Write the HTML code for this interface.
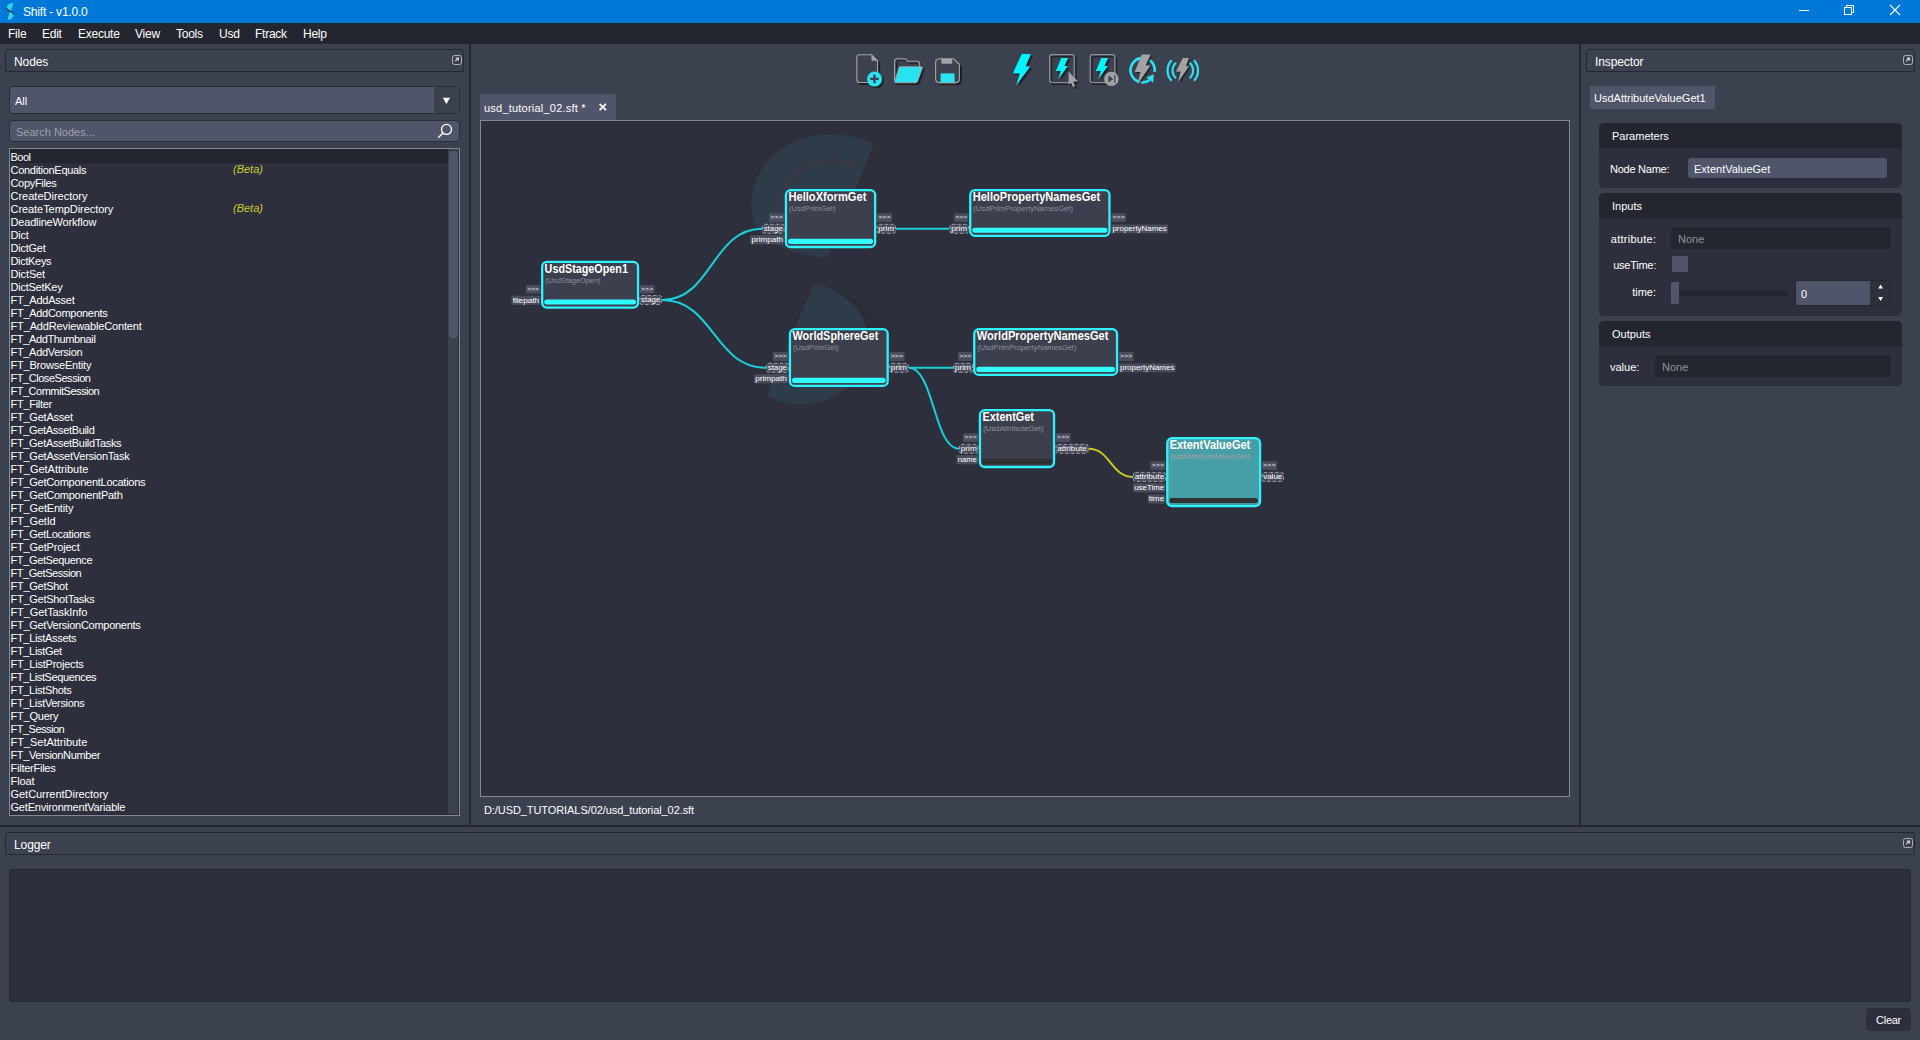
<!DOCTYPE html>
<html>
<head>
<meta charset="utf-8">
<title>Shift - v1.0.0</title>
<style>
html,body{margin:0;padding:0;}
body{width:1920px;height:1040px;overflow:hidden;background:#3c4150;font-family:"Liberation Sans",sans-serif;font-size:11px;color:#fff;position:relative;}
.abs{position:absolute;}
#titlebar{left:0;top:0;width:1920px;height:23px;background:#0078d7;}
#titlebar .t{position:absolute;left:23px;top:5px;font-size:12px;line-height:14px;letter-spacing:-0.2px;color:#fff;white-space:nowrap;}
#menubar{left:0;top:23px;width:1920px;height:21px;background:#23252f;}
#menubar span{position:absolute;top:4px;font-size:12px;line-height:14px;letter-spacing:-0.25px;color:#fff;white-space:nowrap;}
.dockhdr{box-sizing:border-box;border:1px solid #252733;border-radius:3px 3px 0 0;background:#3c4150;height:23px;}
.dockhdr .lbl{position:absolute;left:8px;top:5px;font-size:12px;line-height:14px;letter-spacing:-0.1px;white-space:nowrap;}
.flt{position:absolute;box-sizing:border-box;width:10px;height:10px;border:1.5px solid #acaeb9;border-radius:2.5px;}
.vsep{width:2px;background:#252733;}
.hsep{height:2px;background:#252733;}
#combo{left:9px;top:86px;width:451px;height:28px;box-sizing:border-box;border:1px solid #2a2c38;border-radius:4px;background:#50556a;overflow:hidden;}
#combo .btn{position:absolute;right:0;top:0;width:25px;height:26px;background:#3c4150;border-radius:3px 0 0 3px;}
#combo .txt{position:absolute;left:5px;top:8px;line-height:13px;}
#search{left:9px;top:120px;width:451px;height:22px;box-sizing:border-box;border:1px solid #2a2c38;border-radius:4px;background:#50556a;}
#search .txt{position:absolute;left:6px;top:5px;line-height:13px;color:#9fa2ae;}
#list{left:9px;top:148px;width:451px;height:668px;box-sizing:border-box;border:1px solid #858893;background:#2d303c;overflow:hidden;}
#list .rows{position:absolute;left:0;top:0;width:438px;}
#list .rows div.sel{height:14px;}
#list .rows div.sel span{top:2px;}
#list .rows div{height:13px;line-height:13px;position:relative;white-space:nowrap;letter-spacing:-0.2px;}
#list .rows div.sel{background:#23252f;}
#list .rows div span{position:absolute;left:0.5px;top:1px;}
#list .rows div i{position:absolute;left:223px;top:0px;color:#c8cf2c;font-style:italic;letter-spacing:0;}
#list .track{position:absolute;left:438px;top:0;width:10px;height:665px;background:#3c4150;}
#list .thumb{position:absolute;left:438.5px;top:1.5px;width:9px;height:187px;background:#50556a;border-radius:4px;}
#tab{left:480px;top:94px;width:136px;height:26px;background:#50556a;}
#tab .txt{position:absolute;left:4px;top:8px;line-height:13px;white-space:nowrap;letter-spacing:0.22px;}
#graph{left:480px;top:120px;width:1090px;height:677px;box-sizing:border-box;border:1px solid #858893;background:#2d303c;overflow:hidden;}
#graph svg{position:absolute;left:-1px;top:-1px;}
#graph svg text{font-family:"Liberation Sans",sans-serif;}
#graph svg text.pt{fill:#fff;}
#path{left:484px;top:804px;line-height:13px;white-space:nowrap;letter-spacing:-0.08px;}
.grp{box-sizing:border-box;border-radius:5px;background:#2d303c;overflow:hidden;}
.grp .h{position:absolute;left:0;top:0;right:0;height:25px;background:#23252f;}
.grp .h span{position:absolute;left:13px;top:7px;line-height:13px;}
.lab{line-height:13px;white-space:nowrap;text-align:right;}
.fld{box-sizing:border-box;border-radius:3px;background:#23252f;color:#8f929d;}
.fld span{position:absolute;left:7px;top:6px;line-height:13px;}
#nodetag{left:1590px;top:86px;width:125px;height:23px;background:#50556a;}
#nodetag span{position:absolute;left:4px;top:6px;line-height:13px;white-space:nowrap;}
#logbox{left:9px;top:869px;width:1902px;height:133px;box-sizing:border-box;border:1px solid #262834;border-radius:3px;background:#2d303c;}
#clear{left:1866px;top:1008px;width:45px;height:23px;border-radius:4px;background:#2d303c;text-align:center;line-height:24.5px;letter-spacing:-0.3px;}
</style>
</head>
<body>
<!-- title bar -->
<div id="titlebar" class="abs">
<svg class="abs" style="left:4px;top:2px" width="14" height="19" viewBox="0 0 14 19">
<path d="M9.6 1.2 C5.4 1.0 2.6 3.0 2.4 6.2 C3.6 7.4 5.6 7.8 7.0 8.4 Z" fill="#2ad3e6"/>
<path d="M3.4 17.8 C7.0 17.6 9.6 15.6 9.9 12.2 C8.6 10.9 6.8 10.4 5.6 9.9 Z" fill="#2ad3e6"/>
<path d="M2.3 5.6 C2.4 8.0 4.8 8.8 6.6 9.5 C8.4 10.2 9.9 10.9 10.0 12.8" fill="none" stroke="#3a4454" stroke-width="1.3"/>
</svg>
<div class="t">Shift - v1.0.0</div>
<svg class="abs" style="left:1790px;top:0" width="130" height="23" viewBox="1790 0 130 23" shape-rendering="crispEdges">
<rect x="1799" y="10" width="10" height="1" fill="#fff"/>
<g fill="none" stroke="#fff" stroke-width="1">
<rect x="1844.5" y="7.5" width="7" height="7"/>
<path d="M1846.5 7.5 V5.5 H1853.5 V12.5 H1851.5"/>
</g>
<g stroke="#fff" stroke-width="1.1" shape-rendering="auto"><path d="M1890 5 L1900 15 M1900 5 L1890 15"/></g>
</svg>
</div>
<!-- menu bar -->
<div id="menubar" class="abs">
<span style="left:8px">File</span>
<span style="left:42px">Edit</span>
<span style="left:78px">Execute</span>
<span style="left:135px">View</span>
<span style="left:176px">Tools</span>
<span style="left:219px">Usd</span>
<span style="left:255px">Ftrack</span>
<span style="left:303px">Help</span>
</div>

<!-- separators -->
<div class="abs vsep" style="left:469px;top:44px;height:782px;"></div>
<div class="abs vsep" style="left:1579px;top:44px;height:782px;"></div>
<div class="abs hsep" style="left:0;top:825px;width:1920px;"></div>

<!-- Nodes dock -->
<div class="abs dockhdr" style="left:5px;top:49px;width:459px;"><div class="lbl">Nodes</div><div class="flt" style="left:446px;top:5px;"><svg class="abs" style="left:0;top:0" width="8" height="8" viewBox="0 0 8 8"><path d="M2.2 5.2 L5.2 2.2 M2.8 2 H5.4 V4.6" fill="none" stroke="#d4d6de" stroke-width="1.2"/></svg></div></div>
<div id="combo" class="abs"><div class="txt">All</div><div class="btn"><svg class="abs" style="left:8px;top:10px" width="9" height="8" viewBox="0 0 9 8"><path d="M0.8 0.8 H8 L4.4 7 Z" fill="#fff"/></svg></div></div>
<div id="search" class="abs"><div class="txt">Search Nodes...</div>
<svg class="abs" style="left:425px;top:0px" width="20" height="19" viewBox="0 0 20 19"><circle cx="11.5" cy="8.4" r="5" fill="none" stroke="#fff" stroke-width="1.3"/><path d="M8 12 L3.2 16.8" stroke="#fff" stroke-width="1.4" fill="none"/></svg>
</div>
<div id="list" class="abs">
<div class="rows">
<div class="sel"><span style="letter-spacing:-0.508px">Bool</span></div>
<div><span style="letter-spacing:-0.292px">ConditionEquals</span><i>(Beta)</i></div>
<div><span style="letter-spacing:-0.323px">CopyFiles</span></div>
<div><span style="letter-spacing:-0.002px">CreateDirectory</span></div>
<div><span style="letter-spacing:-0.062px">CreateTempDirectory</span><i>(Beta)</i></div>
<div><span style="letter-spacing:-0.169px">DeadlineWorkflow</span></div>
<div><span style="letter-spacing:-0.176px">Dict</span></div>
<div><span style="letter-spacing:-0.241px">DictGet</span></div>
<div><span style="letter-spacing:-0.332px">DictKeys</span></div>
<div><span style="letter-spacing:-0.138px">DictSet</span></div>
<div><span style="letter-spacing:-0.242px">DictSetKey</span></div>
<div><span style="letter-spacing:-0.24px">FT_AddAsset</span></div>
<div><span style="letter-spacing:-0.281px">FT_AddComponents</span></div>
<div><span style="letter-spacing:-0.143px">FT_AddReviewableContent</span></div>
<div><span style="letter-spacing:-0.367px">FT_AddThumbnail</span></div>
<div><span style="letter-spacing:-0.314px">FT_AddVersion</span></div>
<div><span style="letter-spacing:-0.2px">FT_BrowseEntity</span></div>
<div><span style="letter-spacing:-0.455px">FT_CloseSession</span></div>
<div><span style="letter-spacing:-0.489px">FT_CommitSession</span></div>
<div><span style="letter-spacing:-0.278px">FT_Filter</span></div>
<div><span style="letter-spacing:-0.232px">FT_GetAsset</span></div>
<div><span style="letter-spacing:-0.329px">FT_GetAssetBuild</span></div>
<div><span style="letter-spacing:-0.315px">FT_GetAssetBuildTasks</span></div>
<div><span style="letter-spacing:-0.232px">FT_GetAssetVersionTask</span></div>
<div><span style="letter-spacing:-0.034px">FT_GetAttribute</span></div>
<div><span style="letter-spacing:-0.271px">FT_GetComponentLocations</span></div>
<div><span style="letter-spacing:-0.252px">FT_GetComponentPath</span></div>
<div><span style="letter-spacing:-0.171px">FT_GetEntity</span></div>
<div><span style="letter-spacing:-0.184px">FT_GetId</span></div>
<div><span style="letter-spacing:-0.308px">FT_GetLocations</span></div>
<div><span style="letter-spacing:-0.195px">FT_GetProject</span></div>
<div><span style="letter-spacing:-0.364px">FT_GetSequence</span></div>
<div><span style="letter-spacing:-0.436px">FT_GetSession</span></div>
<div><span style="letter-spacing:-0.267px">FT_GetShot</span></div>
<div><span style="letter-spacing:-0.27px">FT_GetShotTasks</span></div>
<div><span style="letter-spacing:-0.108px">FT_GetTaskInfo</span></div>
<div><span style="letter-spacing:-0.276px">FT_GetVersionComponents</span></div>
<div><span style="letter-spacing:-0.303px">FT_ListAssets</span></div>
<div><span style="letter-spacing:-0.316px">FT_ListGet</span></div>
<div><span style="letter-spacing:-0.228px">FT_ListProjects</span></div>
<div><span style="letter-spacing:-0.373px">FT_ListSequences</span></div>
<div><span style="letter-spacing:-0.318px">FT_ListShots</span></div>
<div><span style="letter-spacing:-0.325px">FT_ListVersions</span></div>
<div><span style="letter-spacing:-0.221px">FT_Query</span></div>
<div><span style="letter-spacing:-0.495px">FT_Session</span></div>
<div><span style="letter-spacing:-0.02px">FT_SetAttribute</span></div>
<div><span style="letter-spacing:-0.367px">FT_VersionNumber</span></div>
<div><span style="letter-spacing:-0.243px">FilterFiles</span></div>
<div><span style="letter-spacing:-0.094px">Float</span></div>
<div><span style="letter-spacing:-0.035px">GetCurrentDirectory</span></div>
<div><span style="letter-spacing:-0.195px">GetEnvironmentVariable</span></div>
</div>
<div class="track"></div><div class="thumb"></div>
</div>

<!-- toolbar -->
<svg class="abs" style="left:840px;top:44px" width="400" height="52" viewBox="840 44 400 52">
<defs>
<filter id="ds" x="-20%" y="-20%" width="150%" height="150%"><feDropShadow dx="1.8" dy="1.8" stdDeviation="0.45" flood-color="#1a1b24" flood-opacity="1"/></filter>
<filter id="ds2" x="-20%" y="-20%" width="150%" height="150%"><feDropShadow dx="1.3" dy="1.3" stdDeviation="0.4" flood-color="#1a1b24" flood-opacity="1"/></filter>
</defs>
<g filter="url(#ds)">
<!-- new -->
<path d="M859.5 54.8 H871.5 L877.5 60.8 V79.5 Q877.5 82.5 874.5 82.5 H859.5 Q856.8 82.5 856.8 79.5 V57.8 Q856.8 54.8 859.5 54.8 Z" fill="#3c4150" stroke="#a3a3a6" stroke-width="1.1"/>
<path d="M871.5 54.8 V60.8 H877.5 Z" fill="#a3a3a6"/>
<circle cx="874.5" cy="78.9" r="7.4" fill="#2be3f0"/>
<path d="M870.2 78.9 H878.8 M874.5 74.6 V83.2" stroke="#3c4150" stroke-width="2.3" fill="none"/>
<!-- open -->
<path d="M894.6 80.5 V61 Q894.6 58.8 896.8 58.8 H904.5 Q905.8 58.8 906.5 59.8 L907.6 61.3 H917 Q919.6 61.3 919.6 64 V66.5" fill="none" stroke="#a3a3a6" stroke-width="1.1"/>
<path d="M900.2 66.8 H921.4 Q922.6 66.8 922.2 68 L917.4 81.6 Q917 82.6 916 82.6 H895.8 Q894.4 82.6 894.9 81.3 L899 67.8 Q899.3 66.8 900.2 66.8 Z" fill="#2be3f0" stroke="#a3a3a6" stroke-width="0.9"/>
<!-- save -->
<path d="M939.5 58.8 H953.6 L959.4 64.6 V78.6 Q959.4 82.6 955.4 82.6 H939.5 Q935.6 82.6 935.6 78.6 V62.8 Q935.6 58.8 939.5 58.8 Z" fill="#3c4150" stroke="#a3a3a6" stroke-width="1.1"/>
<path d="M941.3 58.8 H952.2 V62.6 Q952.2 63.8 951 63.8 H942.5 Q941.3 63.8 941.3 62.6 Z" fill="#a3a3a6"/>
<rect x="940.6" y="73.4" width="14" height="9" fill="#2be3f0"/>
<!-- exec -->
<path d="M1021.7 54.1 H1030.8 L1025.4 66.6 H1030.1 L1016.2 85.3 L1020 73.3 H1012.9 Z" fill="#00f6ff"/>
<!-- exec selected -->
<rect x="1049.6" y="54.7" width="24.6" height="27.8" rx="2.2" fill="none" stroke="#8e8f96" stroke-width="1.2"/>
<path d="M1061.3 58.1 H1068 L1064.3 66 H1067.7 L1058.2 79.2 L1060.9 71 H1055.9 Z" fill="#00f6ff"/>
</g>
<path d="M1068.6 71.6 L1077.8 81.2 L1073.2 81.6 L1075 86.2 L1073 87 L1071 82.4 L1068.6 84.8 Z" fill="#a3a3a6" filter="url(#ds)"/>
<g filter="url(#ds)">
<!-- exec step -->
<rect x="1090.2" y="54.7" width="24.6" height="27.8" rx="2.2" fill="none" stroke="#8e8f96" stroke-width="1.2"/>
<path d="M1101.3 58.1 H1108 L1104.3 66 H1107.7 L1098.2 79.2 L1100.9 71 H1095.9 Z" fill="#00f6ff"/>
</g>
<circle cx="1111.4" cy="78.9" r="7.2" fill="#a3a3a6"/>
<path d="M1108.4 75.4 L1113.4 78.9 L1108.4 82.4 Z" fill="#3c4150"/>
<rect x="1114.2" y="75" width="1.2" height="7.8" fill="#3c4150"/>
<!-- loop -->
<path d="M1148.65 59.7 A12.1 12.1 0 0 1 1154.6 71.9" fill="none" stroke="#2be3f0" stroke-width="2.6"/>
<path d="M1141.5 58.15 A12.1 12.1 0 1 0 1149.6 80.1" fill="none" stroke="#2be3f0" stroke-width="2.6"/>
<path d="M1146.4 77.6 L1153.8 74.2 L1153.2 82.8 Z" fill="#2be3f0"/>
<path d="M1141.8 54.5 H1150.6 L1145.5 65.6 H1150.3 L1137.4 84.6 L1140.5 72.1 H1134.7 Z" fill="#a3a3a6" filter="url(#ds2)"/>
<!-- broadcast -->
<g fill="none" stroke="#2be3f0" stroke-width="2.2">
<path d="M1176 62.8 A10.3 10.3 0 0 0 1176 78.2"/>
<path d="M1171.6 60.2 A15.2 15.2 0 0 0 1171.6 80.8"/>
<path d="M1189.6 62.8 A10.3 10.3 0 0 1 1189.6 78.2"/>
<path d="M1194 60.2 A15.2 15.2 0 0 1 1194 80.8"/>
</g>
<path d="M1182.8 58.1 H1188.9 L1185.8 66.3 H1188.9 L1178 82.2 L1180.7 71.4 H1176 Z" fill="#a3a3a6" filter="url(#ds2)"/>
</svg>

<!-- tab + graph -->
<div id="tab" class="abs"><div class="txt">usd_tutorial_02.sft *</div>
<svg class="abs" style="left:118px;top:8px" width="10" height="10" viewBox="0 0 10 10"><path d="M1.6 1.8 L8.0 8.2 M8.0 1.8 L1.6 8.2" stroke="#fff" stroke-width="1.7" fill="none"/></svg>
</div>
<div id="graph" class="abs">
<svg width="1090" height="677" viewBox="480 120 1090 677">
<g id="wm"><path d="M874 144 C 860 137.5 845 134.5 830 134.5 C 785 134.5 751.5 165 751.5 206 C 751.5 236 776 252 827 258 Z" fill="#2e3c4a"/><path d="M852 165 C 826 154 796 166 784 188 C 774 207 776 224 786 240" fill="none" stroke="#373946" stroke-width="6" stroke-linecap="round"/><path d="M814 283 C 850 293 872 316 867 350 C 862 392 810 420 767 395.5 Z" fill="#2e3c4a"/><path d="M836 292 C 868 300 892 326 884 362 C 880 380 868 394 852 402 C 866 388 872 370 870 350 C 870 322 858 304 836 292 Z" fill="#2a2d38"/></g>
<path d="M662 300 C712.0 300 712.0 228.8 762 228.8" fill="none" stroke="#1bcfd8" stroke-width="2"/>
<path d="M662 300 C714.0 300 714.0 367.8 766 367.8" fill="none" stroke="#1bcfd8" stroke-width="2"/>
<path d="M896 228.8 C922.75 228.8 922.75 228.8 949.5 228.8" fill="none" stroke="#1bcfd8" stroke-width="2"/>
<path d="M908.8 367.8 C930.9 367.8 930.9 367.8 953 367.8" fill="none" stroke="#1bcfd8" stroke-width="2"/>
<path d="M908.8 367.8 C933.9 367.8 933.9 448.8 959 448.8" fill="none" stroke="#1bcfd8" stroke-width="2"/>
<path d="M1088.5 448.8 C1110.75 448.8 1110.75 476.9 1133 476.9" fill="none" stroke="#c9c91f" stroke-width="2"/>
<g><rect x="542.15" y="261.85" width="95.90" height="45.75" rx="4.8" fill="#3c3f4e" stroke="#2ef3fc" stroke-width="2.3"/><rect x="544.20" y="299.45" width="91.80" height="5.1" rx="2.5" fill="#30fdff"/><text x="544.60" y="272.70" font-size="12.3" font-weight="bold" fill="#fff" textLength="83.30" lengthAdjust="spacingAndGlyphs">UsdStageOpen1</text><text x="545.20" y="282.90" font-size="7.8" fill="#8e909a" textLength="55.30" lengthAdjust="spacingAndGlyphs">(UsdStageOpen)</text><rect x="526.00" y="285.00" width="14.30" height="8.60" rx="1" fill="#4b4d5e"/><text x="533.15" y="290.90" font-size="6.2" text-anchor="middle" textLength="11.70" lengthAdjust="spacingAndGlyphs" class="pt">&gt;&gt;&gt;</text><rect x="511.50" y="295.80" width="28.80" height="8.90" rx="1" fill="#4b4d5e"/><text x="525.90" y="302.60" font-size="7.5" text-anchor="middle" textLength="26.40" lengthAdjust="spacingAndGlyphs" class="pt">filepath</text><rect x="639.70" y="285.00" width="14.80" height="8.60" rx="1" fill="#4b4d5e"/><text x="647.10" y="290.90" font-size="6.2" text-anchor="middle" textLength="12.20" lengthAdjust="spacingAndGlyphs" class="pt">&gt;&gt;&gt;</text><rect x="639.90" y="295.50" width="21.60" height="9.00" rx="2" fill="#4b4d5e" stroke="#9c9ea9" stroke-width="1" stroke-dasharray="3.4 2.2"/><text x="650.70" y="302.10" font-size="7.5" text-anchor="middle" textLength="19.20" lengthAdjust="spacingAndGlyphs" class="pt">stage</text></g>
<g><rect x="785.95" y="190.05" width="89.20" height="56.95" rx="4.8" fill="#3c3f4e" stroke="#2ef3fc" stroke-width="2.3"/><rect x="788.00" y="238.85" width="85.10" height="5.1" rx="2.5" fill="#30fdff"/><text x="788.40" y="200.90" font-size="12.3" font-weight="bold" fill="#fff" textLength="78.00" lengthAdjust="spacingAndGlyphs">HelloXformGet</text><text x="789.00" y="211.10" font-size="7.8" fill="#8e909a" textLength="46.50" lengthAdjust="spacingAndGlyphs">(UsdPrimGet)</text><rect x="769.00" y="213.20" width="15.10" height="8.80" rx="1" fill="#4b4d5e"/><text x="776.55" y="219.30" font-size="6.2" text-anchor="middle" textLength="12.50" lengthAdjust="spacingAndGlyphs" class="pt">&gt;&gt;&gt;</text><rect x="762.50" y="224.30" width="21.60" height="9.00" rx="2" fill="#4b4d5e" stroke="#9c9ea9" stroke-width="1" stroke-dasharray="3.4 2.2"/><text x="773.30" y="230.90" font-size="7.5" text-anchor="middle" textLength="19.20" lengthAdjust="spacingAndGlyphs" class="pt">stage</text><rect x="750.30" y="235.20" width="33.80" height="9.00" rx="1" fill="#4b4d5e"/><text x="767.20" y="242.10" font-size="7.5" text-anchor="middle" textLength="31.40" lengthAdjust="spacingAndGlyphs" class="pt">primpath</text><rect x="876.90" y="213.20" width="15.10" height="8.80" rx="1" fill="#4b4d5e"/><text x="884.45" y="219.30" font-size="6.2" text-anchor="middle" textLength="12.50" lengthAdjust="spacingAndGlyphs" class="pt">&gt;&gt;&gt;</text><rect x="877.10" y="224.30" width="18.40" height="9.00" rx="2" fill="#4b4d5e" stroke="#9c9ea9" stroke-width="1" stroke-dasharray="3.4 2.2"/><text x="886.30" y="230.90" font-size="7.5" text-anchor="middle" textLength="16.00" lengthAdjust="spacingAndGlyphs" class="pt">prim</text></g>
<g><rect x="970.25" y="190.05" width="139.20" height="45.80" rx="4.8" fill="#3c3f4e" stroke="#2ef3fc" stroke-width="2.3"/><rect x="972.30" y="227.70" width="135.10" height="5.1" rx="2.5" fill="#30fdff"/><text x="972.70" y="200.90" font-size="12.3" font-weight="bold" fill="#fff" textLength="127.50" lengthAdjust="spacingAndGlyphs">HelloPropertyNamesGet</text><text x="973.30" y="211.10" font-size="7.8" fill="#8e909a" textLength="99.70" lengthAdjust="spacingAndGlyphs">(UsdPrimPropertyNamesGet)</text><rect x="954.00" y="213.20" width="14.40" height="8.80" rx="1" fill="#4b4d5e"/><text x="961.20" y="219.30" font-size="6.2" text-anchor="middle" textLength="11.80" lengthAdjust="spacingAndGlyphs" class="pt">&gt;&gt;&gt;</text><rect x="950.00" y="224.30" width="18.40" height="9.00" rx="2" fill="#4b4d5e" stroke="#9c9ea9" stroke-width="1" stroke-dasharray="3.4 2.2"/><text x="959.20" y="230.90" font-size="7.5" text-anchor="middle" textLength="16.00" lengthAdjust="spacingAndGlyphs" class="pt">prim</text><rect x="1111.20" y="213.20" width="14.80" height="8.80" rx="1" fill="#4b4d5e"/><text x="1118.60" y="219.30" font-size="6.2" text-anchor="middle" textLength="12.20" lengthAdjust="spacingAndGlyphs" class="pt">&gt;&gt;&gt;</text><rect x="1111.20" y="224.40" width="56.80" height="8.90" rx="1" fill="#4b4d5e"/><text x="1139.60" y="231.20" font-size="7.5" text-anchor="middle" textLength="54.40" lengthAdjust="spacingAndGlyphs" class="pt">propertyNames</text></g>
<g><rect x="789.95" y="329.05" width="97.70" height="56.90" rx="4.8" fill="#3c3f4e" stroke="#2ef3fc" stroke-width="2.3"/><rect x="792.00" y="377.80" width="93.60" height="5.1" rx="2.5" fill="#30fdff"/><text x="792.40" y="339.90" font-size="12.3" font-weight="bold" fill="#fff" textLength="85.90" lengthAdjust="spacingAndGlyphs">WorldSphereGet</text><text x="793.00" y="350.10" font-size="7.8" fill="#8e909a" textLength="45.70" lengthAdjust="spacingAndGlyphs">(UsdPrimGet)</text><rect x="772.90" y="352.00" width="15.20" height="8.90" rx="1" fill="#4b4d5e"/><text x="780.50" y="358.20" font-size="6.2" text-anchor="middle" textLength="12.60" lengthAdjust="spacingAndGlyphs" class="pt">&gt;&gt;&gt;</text><rect x="766.50" y="363.30" width="21.65" height="9.00" rx="2" fill="#4b4d5e" stroke="#9c9ea9" stroke-width="1" stroke-dasharray="3.4 2.2"/><text x="777.33" y="369.90" font-size="7.5" text-anchor="middle" textLength="19.25" lengthAdjust="spacingAndGlyphs" class="pt">stage</text><rect x="754.00" y="374.15" width="34.10" height="9.05" rx="1" fill="#4b4d5e"/><text x="771.05" y="381.10" font-size="7.5" text-anchor="middle" textLength="31.70" lengthAdjust="spacingAndGlyphs" class="pt">primpath</text><rect x="889.40" y="352.00" width="15.10" height="8.90" rx="1" fill="#4b4d5e"/><text x="896.95" y="358.20" font-size="6.2" text-anchor="middle" textLength="12.50" lengthAdjust="spacingAndGlyphs" class="pt">&gt;&gt;&gt;</text><rect x="889.60" y="363.30" width="18.70" height="9.00" rx="2" fill="#4b4d5e" stroke="#9c9ea9" stroke-width="1" stroke-dasharray="3.4 2.2"/><text x="898.95" y="369.90" font-size="7.5" text-anchor="middle" textLength="16.30" lengthAdjust="spacingAndGlyphs" class="pt">prim</text></g>
<g><rect x="974.25" y="329.05" width="142.80" height="45.90" rx="4.8" fill="#3c3f4e" stroke="#2ef3fc" stroke-width="2.3"/><rect x="976.30" y="366.80" width="138.70" height="5.1" rx="2.5" fill="#30fdff"/><text x="976.70" y="339.90" font-size="12.3" font-weight="bold" fill="#fff" textLength="131.80" lengthAdjust="spacingAndGlyphs">WorldPropertyNamesGet</text><text x="977.30" y="350.10" font-size="7.8" fill="#8e909a" textLength="99.20" lengthAdjust="spacingAndGlyphs">(UsdPrimPropertyNamesGet)</text><rect x="958.00" y="352.00" width="14.40" height="8.90" rx="1" fill="#4b4d5e"/><text x="965.20" y="358.20" font-size="6.2" text-anchor="middle" textLength="11.80" lengthAdjust="spacingAndGlyphs" class="pt">&gt;&gt;&gt;</text><rect x="953.50" y="363.30" width="18.90" height="9.00" rx="2" fill="#4b4d5e" stroke="#9c9ea9" stroke-width="1" stroke-dasharray="3.4 2.2"/><text x="962.95" y="369.90" font-size="7.5" text-anchor="middle" textLength="16.50" lengthAdjust="spacingAndGlyphs" class="pt">prim</text><rect x="1118.80" y="352.00" width="14.70" height="8.90" rx="1" fill="#4b4d5e"/><text x="1126.15" y="358.20" font-size="6.2" text-anchor="middle" textLength="12.10" lengthAdjust="spacingAndGlyphs" class="pt">&gt;&gt;&gt;</text><rect x="1118.80" y="363.40" width="56.80" height="8.90" rx="1" fill="#4b4d5e"/><text x="1147.20" y="370.20" font-size="7.5" text-anchor="middle" textLength="54.40" lengthAdjust="spacingAndGlyphs" class="pt">propertyNames</text></g>
<g><rect x="979.95" y="410.05" width="74.10" height="56.95" rx="4.8" fill="#3c3f4e" stroke="#2ef3fc" stroke-width="2.3"/><rect x="982.00" y="458.85" width="70.00" height="5.1" rx="2.5" fill="#303030"/><text x="982.40" y="420.90" font-size="12.3" font-weight="bold" fill="#fff" textLength="51.60" lengthAdjust="spacingAndGlyphs">ExtentGet</text><text x="983.00" y="431.10" font-size="7.8" fill="#8e909a" textLength="60.50" lengthAdjust="spacingAndGlyphs">(UsdAttributeGet)</text><rect x="963.00" y="433.20" width="15.10" height="8.80" rx="1" fill="#4b4d5e"/><text x="970.55" y="439.30" font-size="6.2" text-anchor="middle" textLength="12.50" lengthAdjust="spacingAndGlyphs" class="pt">&gt;&gt;&gt;</text><rect x="959.50" y="444.30" width="18.60" height="9.00" rx="2" fill="#4b4d5e" stroke="#9c9ea9" stroke-width="1" stroke-dasharray="3.4 2.2"/><text x="968.80" y="450.90" font-size="7.5" text-anchor="middle" textLength="16.20" lengthAdjust="spacingAndGlyphs" class="pt">prim</text><rect x="956.50" y="455.20" width="21.60" height="9.00" rx="1" fill="#4b4d5e"/><text x="967.30" y="462.10" font-size="7.5" text-anchor="middle" textLength="19.20" lengthAdjust="spacingAndGlyphs" class="pt">name</text><rect x="1055.80" y="433.20" width="14.70" height="8.80" rx="1" fill="#4b4d5e"/><text x="1063.15" y="439.30" font-size="6.2" text-anchor="middle" textLength="12.10" lengthAdjust="spacingAndGlyphs" class="pt">&gt;&gt;&gt;</text><rect x="1056.00" y="444.30" width="32.00" height="9.00" rx="2" fill="#4b4d5e" stroke="#9c9ea9" stroke-width="1" stroke-dasharray="3.4 2.2"/><text x="1072.00" y="450.90" font-size="7.5" text-anchor="middle" textLength="29.60" lengthAdjust="spacingAndGlyphs" class="pt">attribute</text></g>
<g><rect x="1167.25" y="438.15" width="92.80" height="68.00" rx="4.8" fill="#469ea6" stroke="#2ef3fc" stroke-width="2.3"/><rect x="1169.30" y="498.00" width="88.70" height="5.1" rx="2.5" fill="#303030"/><text x="1169.70" y="449.00" font-size="12.3" font-weight="bold" fill="#fff" textLength="80.50" lengthAdjust="spacingAndGlyphs">ExtentValueGet</text><text x="1170.30" y="459.20" font-size="7.8" fill="#a99fa1" textLength="79.70" lengthAdjust="spacingAndGlyphs">(UsdAttributeValueGet)</text><rect x="1150.50" y="461.30" width="14.90" height="8.80" rx="1" fill="#4b4d5e"/><text x="1157.95" y="467.40" font-size="6.2" text-anchor="middle" textLength="12.30" lengthAdjust="spacingAndGlyphs" class="pt">&gt;&gt;&gt;</text><rect x="1133.50" y="472.40" width="31.90" height="9.00" rx="2" fill="#4b4d5e" stroke="#9c9ea9" stroke-width="1" stroke-dasharray="3.4 2.2"/><text x="1149.45" y="479.00" font-size="7.5" text-anchor="middle" textLength="29.50" lengthAdjust="spacingAndGlyphs" class="pt">attribute</text><rect x="1133.00" y="483.30" width="32.40" height="9.00" rx="1" fill="#4b4d5e"/><text x="1149.20" y="490.20" font-size="7.5" text-anchor="middle" textLength="30.00" lengthAdjust="spacingAndGlyphs" class="pt">useTime</text><rect x="1147.60" y="494.50" width="17.80" height="8.90" rx="1" fill="#4b4d5e"/><text x="1156.50" y="501.30" font-size="7.5" text-anchor="middle" textLength="15.40" lengthAdjust="spacingAndGlyphs" class="pt">time</text><rect x="1261.80" y="461.30" width="15.20" height="8.80" rx="1" fill="#4b4d5e"/><text x="1269.40" y="467.40" font-size="6.2" text-anchor="middle" textLength="12.60" lengthAdjust="spacingAndGlyphs" class="pt">&gt;&gt;&gt;</text><rect x="1262.00" y="472.40" width="21.50" height="9.00" rx="2" fill="#4b4d5e" stroke="#9c9ea9" stroke-width="1" stroke-dasharray="3.4 2.2"/><text x="1272.75" y="479.00" font-size="7.5" text-anchor="middle" textLength="19.10" lengthAdjust="spacingAndGlyphs" class="pt">value</text></g>
</svg>
</div>
<div id="path" class="abs">D:/USD_TUTORIALS/02/usd_tutorial_02.sft</div>

<!-- Inspector -->
<div class="abs dockhdr" style="left:1586px;top:49px;width:329px;"><div class="lbl">Inspector</div><div class="flt" style="left:316px;top:5px;"><svg class="abs" style="left:0;top:0" width="8" height="8" viewBox="0 0 8 8"><path d="M2.2 5.2 L5.2 2.2 M2.8 2 H5.4 V4.6" fill="none" stroke="#d4d6de" stroke-width="1.2"/></svg></div></div>
<div id="nodetag" class="abs"><span>UsdAttributeValueGet1</span></div>

<div class="abs grp" style="left:1599px;top:123px;width:303px;height:65px;"><div class="h"><span>Parameters</span></div></div>
<div class="abs lab" style="left:1610px;top:163px;letter-spacing:-0.25px;">Node Name:</div>
<div class="abs fld" style="left:1688px;top:158px;width:199px;height:20px;background:#50556a;color:#fff;"><span style="left:6px;top:4.5px;">ExtentValueGet</span></div>

<div class="abs grp" style="left:1599px;top:193px;width:303px;height:123px;"><div class="h"><span>Inputs</span></div></div>
<div class="abs lab" style="left:1590px;width:66.3px;top:233px;letter-spacing:0.27px;">attribute:</div>
<div class="abs fld" style="left:1671px;top:227px;width:220px;height:22px;"><span>None</span></div>
<div class="abs lab" style="left:1590px;width:66px;top:259px;letter-spacing:-0.25px;">useTime:</div>
<div class="abs" style="left:1672px;top:256px;width:16px;height:16px;border-radius:2px;background:#50556a;"></div>
<div class="abs lab" style="left:1600px;width:56px;top:286px;">time:</div>
<div class="abs" style="left:1675px;top:290px;width:113px;height:6px;border-radius:3px;background:#23252f;"></div>
<div class="abs" style="left:1671px;top:282px;width:8px;height:22px;border-radius:1px;background:#50556a;"></div>
<div class="abs" style="left:1795px;top:280px;width:95px;height:26px;box-sizing:border-box;border:1px solid #23252f;border-radius:3px;background:#50556a;overflow:hidden;">
<span class="abs" style="left:5px;top:7px;line-height:13px;">0</span>
<div class="abs" style="left:74px;top:0;width:20px;height:24px;background:#2d303c;"></div>
<svg class="abs" style="left:74px;top:-1px" width="20" height="26" viewBox="0 0 20 26"><path d="M8.2 8.6 L10.6 4.6 L13 8.6 Z M8.2 17 L10.6 21 L13 17 Z" fill="#fff"/></svg>
</div>

<div class="abs grp" style="left:1599px;top:321px;width:303px;height:65px;"><div class="h"><span>Outputs</span></div></div>
<div class="abs lab" style="left:1610px;top:361px;">value:</div>
<div class="abs fld" style="left:1655px;top:355px;width:236px;height:22px;"><span>None</span></div>

<!-- Logger -->
<div class="abs dockhdr" style="left:5px;top:832px;width:1910px;height:23px;"><div class="lbl">Logger</div><div class="flt" style="left:1897px;top:5px;"><svg class="abs" style="left:0;top:0" width="8" height="8" viewBox="0 0 8 8"><path d="M2.2 5.2 L5.2 2.2 M2.8 2 H5.4 V4.6" fill="none" stroke="#d4d6de" stroke-width="1.2"/></svg></div></div>
<div id="logbox" class="abs"></div>
<div id="clear" class="abs">Clear</div>
</body>
</html>
